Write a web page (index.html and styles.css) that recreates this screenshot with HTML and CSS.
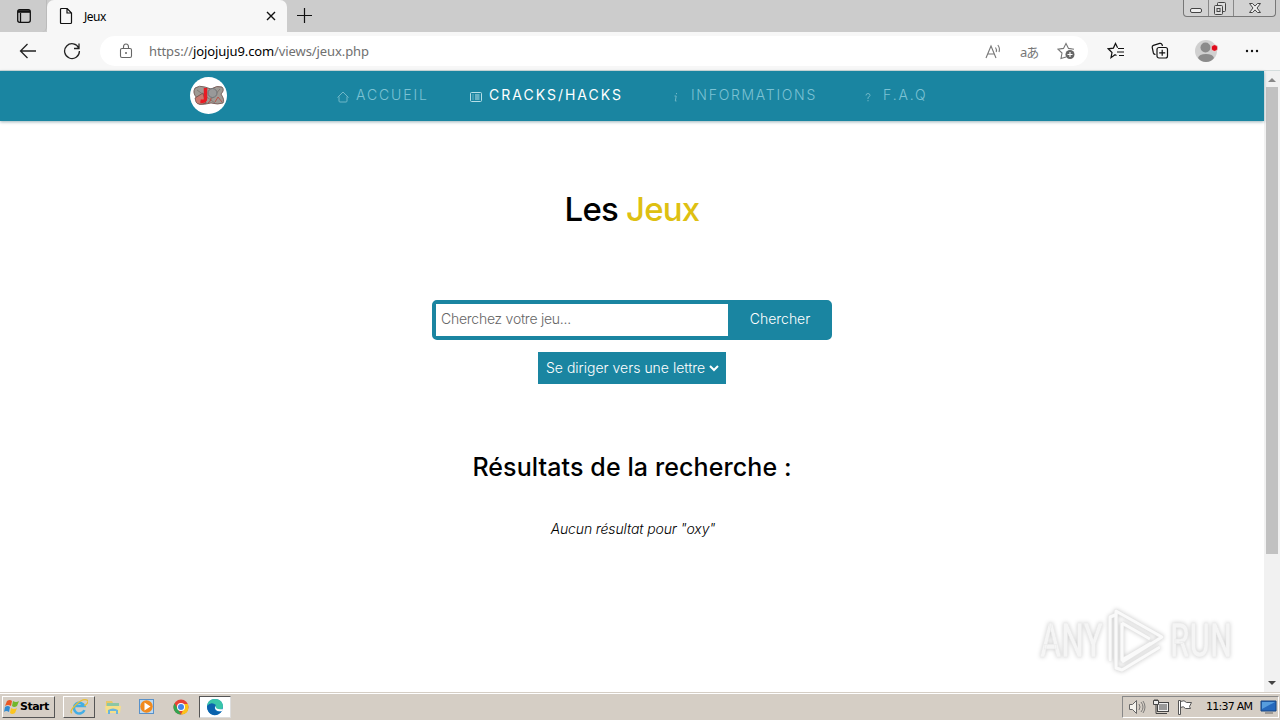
FILE: index.html
```html
<!DOCTYPE html>
<html lang="fr">
<head>
    <meta charset="UTF-8">
    <meta name="viewport" content="width=device-width, initial-scale=1.0">
    <title>Jeux</title>
    <link rel="stylesheet" href="styles.css">
</head>
<body>
    <!-- Tabs -->
    <div class="tabbar">
        <div class="tab-actions">
            <svg width="16" height="16" viewBox="0 0 16 16" fill="none" stroke="#111" stroke-width="1.3"><rect x="1.7" y="1.7" width="12.6" height="12.6" rx="2"/><path d="M2 3.5h12" stroke-width="2.6"/><path d="M4.5 5v9"/></svg>
        </div>
        <div class="tab">
            <svg width="14" height="18" viewBox="0 0 14 18" fill="none" stroke="#111" stroke-width="1.2"><path d="M2.5 1.5h5.7L12.5 6v9.5q0 1-1 1h-9q-1 0-1-1v-13q0-1 1-1zM8 1.5V6h4.5"/></svg>
            <span class="tab-title">Jeux</span>
            <svg class="tab-close" width="10" height="10" viewBox="0 0 10 10" stroke="#111" stroke-width="1.4"><path d="M1 1l8 8M9 1l-8 8"/></svg>
        </div>
        <svg class="new-tab" width="16" height="16" viewBox="0 0 16 16" stroke="#111" stroke-width="1.2"><path d="M7.5 0v15M0 7.500h15"/></svg>
        <div class="window-buttons">
            <span><svg width="24" height="17" viewBox="0 0 24 17" fill="#eee" stroke="#444"><rect x="6.500" y="8.500" width="11" height="4" rx="1.500"/></svg></span>
            <span><svg width="24" height="17" viewBox="0 0 24 17" fill="#ddd" stroke="#444"><rect x="8.500" y="2.500" width="8" height="9" rx="1"/><rect x="5.500" y="5.500" width="8" height="9" rx="1"/><rect x="8" y="8.500" width="3" height="3"/></svg></span>
            <span><svg width="41" height="17" viewBox="0 0 41 17" fill="#eee" stroke="#444"><path d="M15.500 3.500h3l2.500 2.600 2.500-2.600h3L23 8l3.500 4.500h-3L21 9.900l-2.500 2.600h-3L19 8z"/></svg></span>
        </div>
    </div>

    <!-- Toolbar -->
    <div class="toolbar">
        <svg class="back" width="18" height="16" viewBox="0 0 18 16" fill="none" stroke="#222" stroke-width="1.3"><path d="M8.500 1L1.500 8l7 7M1.500 8H17"/></svg>
        <svg class="reload" width="18" height="18" viewBox="0 0 18 18" fill="none" stroke="#222" stroke-width="1.3"><path d="M15.800 6.200A7.400 7.400 0 1 0 16.400 9M16 1.500v5h-5"/></svg>
        <div class="address">
            <svg class="lock" width="14" height="16" viewBox="0 0 14 16" fill="none" stroke="#666" stroke-width="1.100"><rect x="1.500" y="5.500" width="11" height="9" rx="1.500"/><path d="M4.500 5.500V4a2.500 3 0 0 1 5 0v1.500"/><circle cx="7" cy="10" r="1" fill="#666" stroke="none"/></svg>
            <span class="url">https://<b>jojojuju9.com</b>/views/jeux.php</span>
            <svg class="read" width="17" height="15" viewBox="0 0 17 15" fill="none" stroke="#777" stroke-width="1.100"><path d="M1 14L6 2l5 12M2.700 10h6.600M10.500 3.500q1.500 2 .700 4.500M12.800 1q2.500 3 1.200 7"/></svg>
            <span class="translate">aあ</span>
            <svg class="fav" width="19" height="18" viewBox="0 0 19 18" fill="none" stroke="#777" stroke-width="1.100"><path d="M9 15l-5 1.500 1-5.500L1 7.200l5.500-.8L9 1.500l2.500 4.900 5.500.8"/><circle cx="13" cy="12.500" r="4.500" fill="#666" stroke="none"/><path d="M13 10v5M10.500 12.500h5" stroke="#fff"/></svg>
        </div>
        <svg class="favorites" width="18" height="18" viewBox="0 0 18 18" fill="none" stroke="#111" stroke-width="1.200"><path d="M9.500 13.500L8 12.700l-4 3 1-5.200L1.200 6.800l5.200-.7L8.500 1.500l2.100 4.200M11 6.500h6M10 10h7M12 13.500h5"/></svg>
        <svg class="collections" width="18" height="18" viewBox="0 0 18 18" fill="none" stroke="#111" stroke-width="1.200"><path d="M4.500 12.500C3 12.500 2.700 12 2.400 11L1.200 5.500Q1 4 2.400 3.400L8.700 1.400Q10.500 1 11 2.500l.5 1.500"/><rect x="6" y="5.500" width="10.500" height="10.500" rx="2"/><path d="M11.200 7.800v6M8.200 10.800h6"/></svg>
        <div class="avatar">
            <svg width="24" height="24" viewBox="0 0 24 24"><circle cx="12" cy="12" r="11" fill="#d0d0d0"/><circle cx="11.500" cy="8.500" r="5" fill="#8b8b8b"/><path d="M4 19q1-4 8-4t8 4q-3 4-8 4t-8-4z" fill="#8b8b8b"/><circle cx="20.500" cy="9" r="3.300" fill="#e00b1c" stroke="#e8f0ec" stroke-width=".7"/></svg>
        </div>
        <svg class="more" width="14" height="4" viewBox="0 0 14 4" fill="#111"><circle cx="2" cy="2" r="1.200"/><circle cx="7" cy="2" r="1.200"/><circle cx="12" cy="2" r="1.200"/></svg>
    </div>

    <!-- Site -->
    <div class="viewport">
        <div class="page">
            <nav class="navbar">
                <svg class="logo" width="38" height="38" viewBox="0 0 38 38">
                    <circle cx="19.500" cy="18.500" r="18.500" fill="#fff"/>
                    <g stroke="#6c4b46" stroke-width=".8">
                        <path d="M6 11q4-3 10-1l6 2q6-4 11-2 3 3-1 7 4 6 2 9-5 2-12 0-7 2-12 1-4-2-2-6-5-5-2-10z" fill="#a09a94"/>
                        <path d="M6 21l8-5 3 10q-8 3-10-1z" fill="#c9796f"/>
                    </g>
                    <path d="M8 13l18 13M31 12L19 26" stroke="#776b67" stroke-width=".7"/>
                    <path d="M16.500 11v11q0 3-5 2" fill="none" stroke="#e91b23" stroke-width="3.500"/>
                    <circle cx="23.500" cy="16" r="4.500" fill="#999" stroke="#707477"/>
                    <path d="M22 21q0 4-3 5M26 25l3-5 4 5" fill="none" stroke="#b9534a"/>
                </svg>
                <a class="nav-link home"><svg width="12" height="12" viewBox="0 0 12 12"><path d="M.500 6.500L6 1l5.500 5.500M2 5.500V10q0 1 1 1h6q1 0 1-1V5.500"/></svg><span>ACCUEIL</span></a>
                <a class="nav-link cracks active"><svg width="12" height="12" viewBox="0 0 12 12"><rect x=".5" y="1.500" width="11" height="9" rx="1"/><path d="M2.500 4h1M5 4h4.500M2.500 6h1M5 6h4.500M2.500 8h1M5 8h4.500"/></svg><span>CRACKS/HACKS</span></a>
                <a class="nav-link infos"><svg width="12" height="12" viewBox="0 0 12 12"><path d="M5.500 2v1.200M3.500 5h1.700L4.300 10h1.200"/></svg><span>INFORMATIONS</span></a>
                <a class="nav-link faq"><svg width="12" height="12" viewBox="0 0 12 12"><path d="M3 4.500Q3 2.500 5 2.500T7 4.500Q7 5.500 5 6.500V8M5 9v1.300"/></svg><span>F.A.Q</span></a>
            </nav>

            <h1>Les <span>Jeux</span></h1>

            <form class="search">
                <input type="text" placeholder="Cherchez votre jeu...">
                <button type="button">Chercher</button>
            </form>

            <div class="letters">
                <span>Se diriger vers une lettre</span>
                <svg width="10" height="8" viewBox="0 0 10 8" fill="none" stroke="#fff" stroke-width="2"><path d="M1 2l4 4 4-4"/></svg>
            </div>

            <h2>Résultats de la recherche :</h2>
            <p class="no-result">Aucun résultat pour "oxy"</p>

            <svg class="watermark" width="216" height="72" viewBox="0 0 216 72">
                <g class="mark-text"><text x="8" y="51" textLength="63" lengthAdjust="spacingAndGlyphs">ANY</text><text x="138" y="51" textLength="62" lengthAdjust="spacingAndGlyphs">RUN</text></g>
                <path class="mark-edge" d="M78 55V11l5-2M84 57V5l46 26-40 25M90 17v37l29-17M90 17l28 16M84 57v5l6 2 38-23"/>
                <path class="mark-line" d="M78 55V11l5-2M84 57V5l46 26-40 25M90 17v37l29-17M90 17l28 16M84 57v5l6 2 38-23"/>
            </svg>
        </div>
        <div class="scrollbar">
            <i class="arrow-up"></i>
            <div class="thumb"></div>
            <i class="arrow-down"></i>
        </div>
    </div>

    <!-- Taskbar -->
    <div class="taskbar">
        <div class="start">
            <svg width="16" height="16" viewBox="0 0 16 16"><path d="M3 2q3-2 5 0L7 7Q4 5 1 7z" fill="#e95824"/><path d="M9 2q3 2 6 0l-2 5q-3 2-5 0z" fill="#72b72b"/><path d="M1 8q3-2 5 0l-1 5q-3-2-5 0z" fill="#318bd1"/><path d="M7 9q3 2 6 0l-2 5q-3 2-5 0z" fill="#fbc51f"/></svg>
            <span>Start</span>
        </div>
        <div class="task raised"><svg width="18" height="18" viewBox="0 0 20 20" fill="none"><path d="M16 13.500A6 6 0 1 1 16 9H5" stroke="#43aee5" stroke-width="2.800"/><path d="M2 17q-3-2 4-9t12-6-2 7" stroke="#e8bd32" stroke-width="1.400"/></svg></div>
        <div class="task"><svg width="18" height="18" viewBox="0 0 18 18"><path d="M2 3h6l1 2h6v10H2z" fill="#e8c867"/><path d="M3 5h12v3H3z" fill="#8cc7a4"/><path d="M1 8h16l-1 7H2z" fill="#f5df89"/><path d="M4 16v-4q5-3 10 0v4h-2v-3H6v3z" fill="#6ab5dc"/></svg></div>
        <div class="task"><svg width="18" height="18" viewBox="0 0 18 18"><rect x="1.500" y="1.500" width="14" height="14" fill="#bcdaf3" stroke="#5991c9"/><circle cx="8.500" cy="8.500" r="6.200" fill="#f18a1e"/><path d="M6.500 4.500l6 4-6 4z" fill="#fff"/></svg></div>
        <div class="task"><svg width="18" height="18" viewBox="0 0 18 18"><circle cx="9" cy="9" r="7.500" fill="#e74235"/><path d="M2.500 5.200L7 13l2 3.500A7.500 7.500 0 0 1 2.500 5.200z" fill="#31a551"/><path d="M9 16.500L12.500 9 11 6h5q2 10-7 10.500z" fill="#fbc318"/><circle cx="9" cy="9" r="4" fill="#fff"/><circle cx="9" cy="9" r="3" fill="#4285e9"/></svg></div>
        <div class="task pressed"><svg width="18" height="18" viewBox="0 0 18 18"><circle cx="9" cy="9" r="8" fill="#167bc0"/><path d="M1 8Q2 1 9 1q7 0 8 7 0 4-5 4-3 0-2-3Q9 5 1 8z" fill="#39c5a9"/><path d="M1 8q4-5 9-1-3 2 0 6 3 2 6 0-4 5-9 4-6-2-6-9z" fill="#0b63ad"/><path d="M10 8q-1 4 7 3l-1 2q-4 1-6-1-2-2 0-4z" fill="#fff"/></svg></div>
        <div class="tray">
            <svg width="18" height="18" viewBox="0 0 18 18" fill="#f5f3ed" stroke="#666"><path d="M1.500 6.500h3l4-4v13l-4-4h-3z"/><path d="M11 6q2 3 0 6M13 4q4 5 0 10M15 3q4 6 0 12" fill="none" stroke-width=".8"/></svg>
            <svg width="18" height="18" viewBox="0 0 18 18" fill="#eee" stroke="#444"><rect x="5.500" y="4.500" width="11" height="9"/><rect x="7" y="6" width="8" height="6" fill="#999" stroke="none"/><path d="M1.500 2.500h5v4h-5zM3 1v2M5 1v2" /><path d="M4 7v8.500h11" fill="none"/></svg>
            <svg width="18" height="18" viewBox="0 0 18 18" fill="#fff" stroke="#555"><path d="M2.500 2.500h2v14h-2zM4.500 3.500q4-2 6 1h5l-2 4 1 2h-5q-2-3-5-1z"/></svg>
            <span class="clock">11:37 AM</span>
            <svg width="17" height="16" viewBox="0 0 17 16"><path d="M1 2h15v10H1z" fill="#2669bd" stroke="#174480"/><path d="M2 3h13L2 10z" fill="#579dde"/><path d="M5 14h8" stroke="#666"/></svg>
        </div>
    </div>
</body>
</html>
```

FILE: styles.css
```css
* {
    box-sizing: border-box;
}
body {
    margin: 0;
    width: 1280px;
    height: 720px;
    overflow: hidden;
    display: flex;
    flex-direction: column;
    background: #fff;
    font-family: Inter, sans-serif;
}
svg {
    display: block;
    flex: none;
}

/* browser */
.tabbar {
    height: 32px;
    background: #ccc;
    display: flex;
    flex: none;
}
.tab-actions {
    width: 47px;
    padding: 8px 0 0 16px;
    border-right: 1px solid #bbb;
    border-bottom-right-radius: 5px;
}
.tab {
    width: 240px;
    display: flex;
    align-items: center;
    padding: 0 11px 0 12px;
    background: #f7f7f7;
    border-radius: 7px 7px 0 0;
}
.tab-title {
    margin-left: 11px;
    font: 12px "Noto Sans", sans-serif;
    letter-spacing: -0.5px;
}
.tab-close {
    margin-left: auto;
}
.new-tab {
    margin: 8px 0 0 10px;
}
.window-buttons {
    display: flex;
    height: 17px;
    margin-left: auto;
    margin-right: 4px;
    border: 1px solid #777;
    border-top: 0;
    border-radius: 0 0 4px 4px;
    background: #d2d2d2;
}
.window-buttons span + span {
    border-left: 1px solid #888;
}
.toolbar {
    height: 39px;
    display: flex;
    flex: none;
    align-items: center;
    background: #f7f7f7;
    border-bottom: 1px solid #d4dddd;
    padding-left: 19px;
}
.reload {
    margin-left: 26px;
}
.address {
    width: 988px;
    height: 30px;
    margin-left: 19px;
    padding-left: 19px;
    display: flex;
    align-items: center;
    background: #fff;
    border-radius: 15px;
}
.url {
    width: 222px;
    margin-left: 16px;
    white-space: nowrap;
    color: #707070;
    font: 13px "Noto Sans", sans-serif;
    letter-spacing: -0.1px;
}
.url b {
    color: #000;
    font-weight: 400;
}
.read {
    margin-left: 614px;
}
.translate {
    width: 20px;
    margin-left: 18px;
    color: #777;
    font: 13px "Noto Sans", "Noto Sans CJK JP", sans-serif;
    letter-spacing: -1px;
}
.fav {
    margin-left: 17px;
}
.favorites {
    margin-left: 19px;
}
.collections {
    margin-left: 26px;
}
.avatar {
    margin-left: 25px;
}
.more {
    margin-left: 27px;
}

/* page */
.viewport {
    height: 621px;
    flex: none;
    display: flex;
}
.page {
    position: relative;
    width: 1264px;
    text-align: center;
}
.navbar {
    height: 50px;
    display: flex;
    align-items: center;
    padding-left: 189px;
    background: #1a85a1;
    box-shadow: 0 1px 3px rgba(0, 65, 80, 0.4);
}
.logo {
    margin-right: 110px;
}
.nav-link {
    display: flex;
    align-items: center;
    padding-bottom: 2px;
    color: #7cc2d4;
    font-size: 14px;
    font-weight: 300;
    line-height: 20px;
    white-space: nowrap;
}
.nav-link svg {
    width: 12px;
    margin-right: 7px;
    margin-top: 3px;
    fill: none;
    stroke: #6fb7c7;
    stroke-width: 1;
}
.nav-link.active {
    color: #fff;
    font-weight: 400;
}
.nav-link.active svg {
    stroke: #b6dfe8;
}
.home {
    width: 133px;
    letter-spacing: 1.9px;
}
.cracks {
    width: 201px;
    letter-spacing: 2px;
}
.infos {
    width: 192px;
    letter-spacing: 1.7px;
}
.nav-link.infos svg,
.nav-link.faq svg {
    margin-right: 8px;
}
.faq {
    letter-spacing: 1.9px;
}
h1 {
    height: 50px;
    margin: 63px 0 0;
    font-size: 33px;
    font-weight: 500;
    line-height: 50px;
    letter-spacing: -0.8px;
}
h1 span {
    color: #dec012;
}
.search {
    width: 400px;
    height: 40px;
    margin: 66px auto 0;
    display: flex;
    border: 4px solid #1a85a1;
    border-radius: 5px;
    background: #1a85a1;
}
.search input {
    width: 292px;
    padding: 0 5px 3px;
    border: 0;
    border-radius: 0;
    font: 300 14px Inter, sans-serif;
    letter-spacing: -0.25px;
}
.search input::placeholder {
    color: #666;
}
.search button {
    flex: 1;
    padding: 0 0 3px 4px;
    border: 0;
    background: none;
    color: #fff;
    font: 300 14px Inter, sans-serif;
}
.letters {
    width: 188px;
    height: 32px;
    margin: 12px auto 0;
    padding: 0 7px 2px 8px;
    display: flex;
    align-items: center;
    justify-content: space-between;
    background: #1a85a1;
    color: #fff;
    font-size: 14px;
    font-weight: 300;
    white-space: nowrap;
}
.letters svg {
    margin-top: 2px;
}
h2 {
    height: 36px;
    margin: 65px 0 0;
    font-size: 25px;
    font-weight: 500;
    line-height: 36px;
    letter-spacing: 0.1px;
}
.no-result {
    margin: 34px 0 0 2px;
    font-size: 14px;
    font-style: italic;
    font-weight: 300;
    line-height: 20px;
    letter-spacing: -0.12px;
}
.watermark {
    position: absolute;
    right: 16px;
    bottom: 14px;
    overflow: visible;
    filter: drop-shadow(0 0 2px rgba(0, 0, 0, 0.2));
}
.mark-text {
    fill: #f5f5f5;
    stroke: #e8e8e8;
    stroke-width: 0.5px;
    font: 500 48px/1 Roboto, sans-serif;
}
.mark-edge,
.mark-line {
    fill: none;
    stroke: #e5e5e5;
    stroke-width: 4px;
    stroke-linejoin: round;
}
.mark-line {
    stroke: #fafafa;
    stroke-width: 3px;
}
.scrollbar {
    width: 16px;
    display: flex;
    flex-direction: column;
    align-items: center;
    background: #f1f1f1;
}
.arrow-up,
.arrow-down {
    border: 4px solid transparent;
}
.arrow-up {
    margin-top: 3px;
    border-bottom-color: #888;
}
.arrow-down {
    margin: auto 0 3px;
    border-top-color: #444;
}
.thumb {
    width: 12px;
    height: 467px;
    margin-top: 5px;
    background: #c1c1c1;
}

/* windows taskbar */
.taskbar {
    height: 28px;
    flex: none;
    display: flex;
    align-items: center;
    padding: 2px 1px 2px 2px;
    background: #d5cec5;
    border-top: 1px solid #d5cec5;
    box-shadow: inset 0 1px #fff;
}
.start {
    width: 53px;
    height: 22px;
    margin-right: 8px;
    display: flex;
    align-items: center;
    border: 1px solid;
    border-color: #fff #555 #555 #fff;
    font: bold 11px "DejaVu Sans", sans-serif;
    letter-spacing: -0.5px;
}
.start svg {
    margin-left: 1px;
}
.task {
    width: 32px;
    height: 22px;
    margin-right: 2px;
    display: flex;
    align-items: center;
    justify-content: center;
    border: 1px solid transparent;
}
.raised {
    border-color: #fff #555 #555 #fff;
}
.pressed {
    background: #fff;
    border-color: #555 #ddd #ddd #555;
}
.tray {
    width: 157px;
    height: 22px;
    margin-left: auto;
    padding: 0 1px 0 5px;
    display: flex;
    align-items: center;
    gap: 6px;
    border: 1px solid;
    border-color: #888 #fff #fff #888;
}
.clock {
    flex: 1;
    margin-left: 6px;
    white-space: nowrap;
    font: 11px "DejaVu Sans", sans-serif;
    letter-spacing: -0.75px;
}
```
